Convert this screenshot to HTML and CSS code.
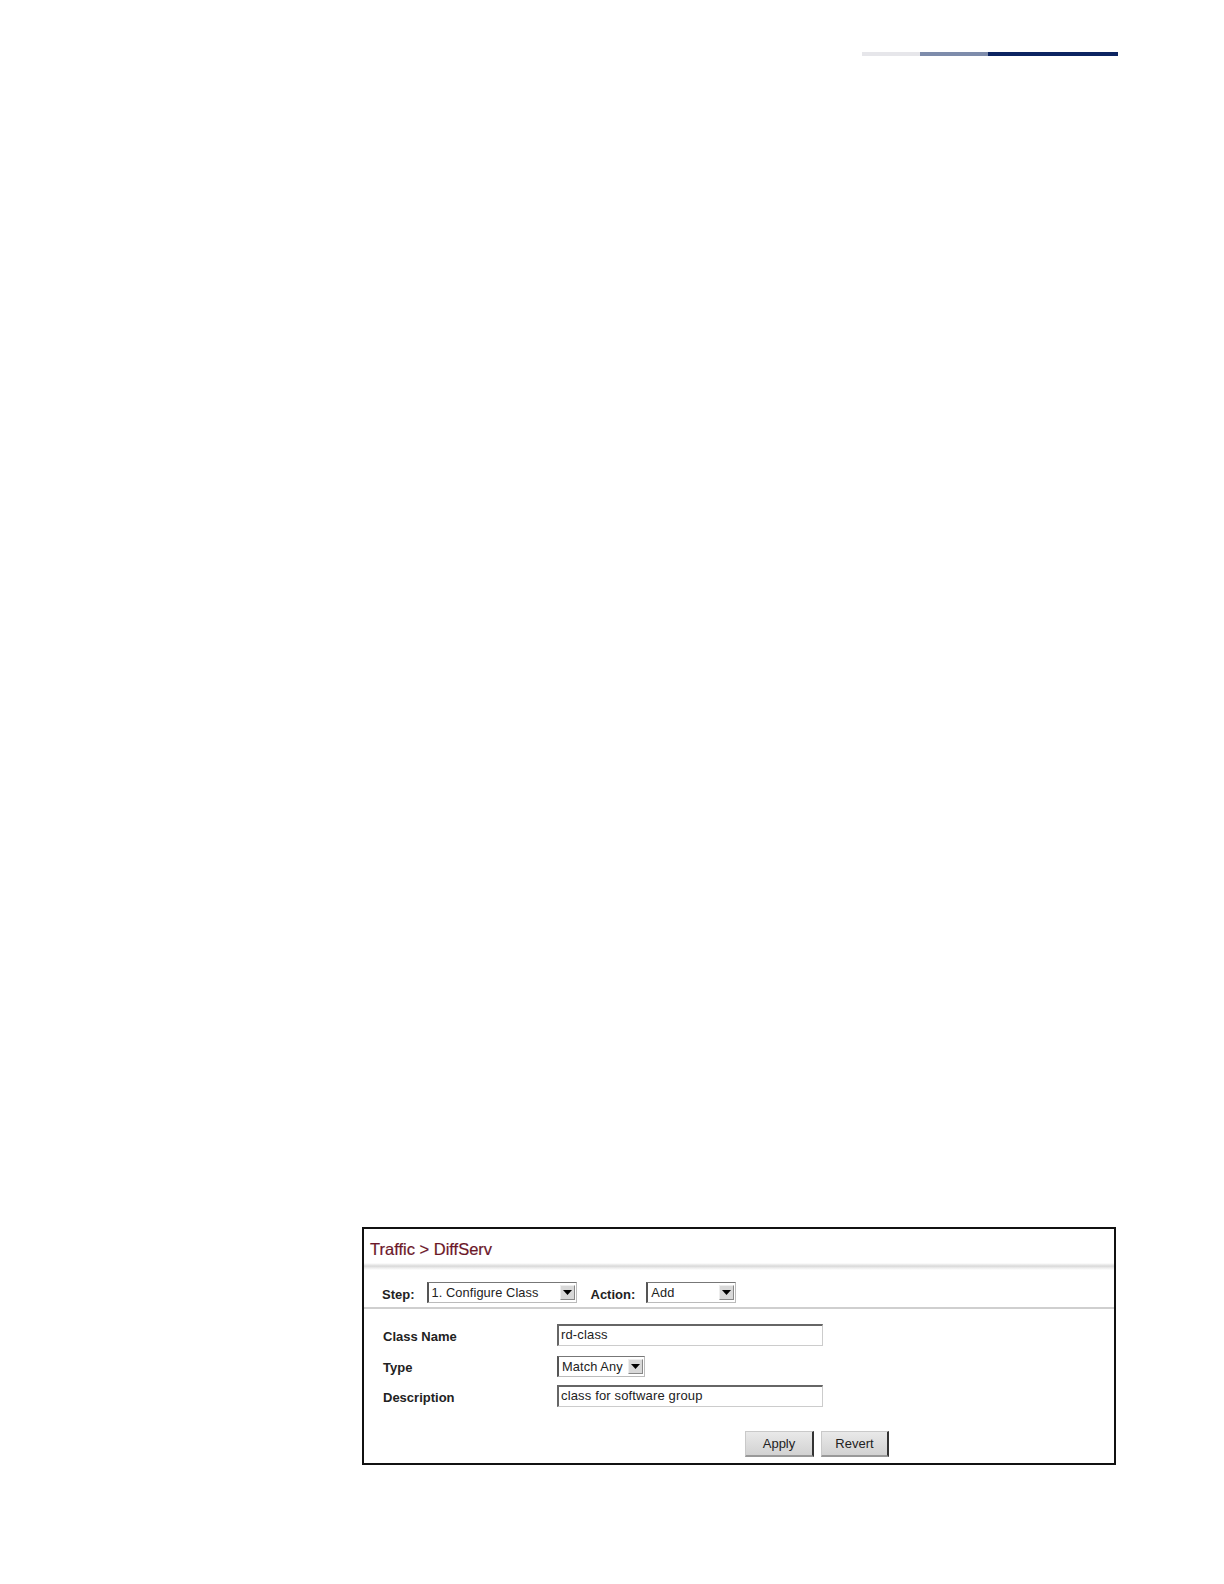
FILE: index.html
```html
<!DOCTYPE html>
<html>
<head>
<meta charset="utf-8">
<link rel="stylesheet" href="styles.css">
</head>
<body>
<div class="page">
  <div class="topbar">
    <span class="seg seg-light"></span>
    <span class="seg seg-mid"></span>
    <span class="seg seg-dark"></span>
  </div>

  <div class="panel">
    <div class="title">Traffic &gt; DiffServ</div>
    <div class="title-rule"></div>
    <div class="step-row">
      <span class="lbl">Step:</span>
      <div class="select sel-step"><span class="sel-text">1. Configure Class</span><span class="arrow"><svg width="9" height="5" viewBox="0 0 9 5"><path d="M0 0H9L4.5 5Z" fill="#000"/></svg></span></div>
      <span class="lbl lbl-action">Action:</span>
      <div class="select sel-action"><span class="sel-text">Add</span><span class="arrow"><svg width="9" height="5" viewBox="0 0 9 5"><path d="M0 0H9L4.5 5Z" fill="#000"/></svg></span></div>
    </div>
    <div class="form">
      <div class="row row-name">
        <span class="flabel">Class Name</span>
        <div class="input">rd-class</div>
      </div>
      <div class="row row-type">
        <span class="flabel">Type</span>
        <div class="select sel-type"><span class="sel-text">Match Any</span><span class="arrow"><svg width="9" height="5" viewBox="0 0 9 5"><path d="M0 0H9L4.5 5Z" fill="#000"/></svg></span></div>
      </div>
      <div class="row row-desc">
        <span class="flabel">Description</span>
        <div class="input">class for software group</div>
      </div>
    </div>
    <div class="buttons">
      <span class="btn btn-apply">Apply</span>
      <span class="btn btn-revert">Revert</span>
    </div>
  </div>
</div>
</body>
</html>
```

FILE: styles.css
```css
html, body {
  margin: 0;
  padding: 0;
  background: #fff;
}
body {
  font-family: "Liberation Sans", Arial, sans-serif;
  color: #222;
}
.page {
  width: 1224px;
  height: 1584px;
  padding-top: 52px;
  box-sizing: border-box;
}
.topbar {
  display: flex;
  margin-left: 862px;
  width: 256px;
  height: 4px;
}
.seg { display: block; height: 4px; }
.seg-light { width: 58px; background: #e6e6ea; }
.seg-mid { width: 68px; background: #7e8cab; }
.seg-dark { width: 130px; background: #0c2461; }

.panel {
  margin-top: 1171px;
  margin-left: 362px;
  width: 754px;
  height: 238px;
  border: 2px solid #111;
  box-sizing: border-box;
}
.title {
  font-size: 16.5px;
  color: #6b1628;
  padding: 10px 0 0 6px;
  height: 20px;
  line-height: 20px;
  -webkit-text-stroke: 0.2px #6b1628;
}
.title-rule {
  height: 7px;
  margin-top: 4px;
  background: linear-gradient(#ffffff, #d9d9d9 45%, #ececec 70%, #ffffff);
}
.step-row {
  display: flex;
  align-items: center;
  padding: 12px 0 4px 18px;
  border-bottom: 2px solid #cfcfcf;
}
.lbl {
  font-size: 13px;
  font-weight: bold;
  color: #222;
  margin-top: 4px;
}
.lbl-action { margin-left: 14px; }
.select {
  display: flex;
  align-items: center;
  justify-content: space-between;
  height: 21px;
  box-sizing: border-box;
  border-top: 1px solid #777;
  border-left: 2px solid #555;
  border-right: 1px solid #bbb;
  border-bottom: 1px solid #bbb;
  background: #fff;
  font-size: 12.8px;
  color: #222;
  padding: 0 1px 0 3px;
}
.sel-step { width: 150px; margin-left: 12px; }
.sel-action { width: 90px; margin-left: 11px; }
.sel-type { width: 88px; }
.sel-text { line-height: 18px; letter-spacing: 0.1px; }
.arrow {
  display: flex;
  align-items: center;
  justify-content: center;
  width: 15px;
  height: 15px;
  box-sizing: border-box;
  background: #d8d8d8;
  border: 1px solid #888;
  border-top-color: #eee;
  border-left-color: #eee;
}
.arrow svg { display: block; }

.form {
  display: flex;
  flex-direction: column;
  padding: 15px 0 0 19px;
}
.row {
  display: flex;
  align-items: center;
  height: 22px;
}
.row-type { margin-top: 10px; height: 21px; }
.row-desc { margin-top: 8px; }
.flabel {
  width: 174px;
  font-size: 13px;
  font-weight: bold;
  color: #222;
  margin-top: 2px;
}
.input {
  width: 266px;
  height: 22px;
  box-sizing: border-box;
  border-top: 2px solid #666;
  border-left: 2px solid #666;
  border-right: 1px solid #ccc;
  border-bottom: 1px solid #ccc;
  font-size: 13px;
  letter-spacing: 0.15px;
  line-height: 18px;
  padding-left: 2px;
  color: #222;
}

.buttons {
  display: flex;
  gap: 7px;
  padding-left: 381px;
  margin-top: 24px;
}
.btn {
  display: flex;
  align-items: center;
  justify-content: center;
  height: 26px;
  box-sizing: border-box;
  background: linear-gradient(#e9e9e9, #d2d2d2);
  border: 1px solid #c9c9c9;
  border-right: 2px solid #333;
  border-bottom: 2px solid #999;
  font-size: 13px;
  color: #222;
}
.btn-apply { width: 69px; }
.btn-revert { width: 68px; }
```
